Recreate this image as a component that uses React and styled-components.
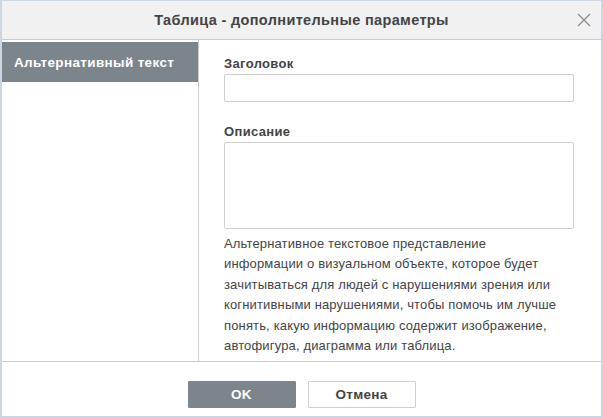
import React from "react";
import styled, { createGlobalStyle } from "styled-components";

const GlobalStyle = createGlobalStyle`
  html, body {
    margin: 0;
    padding: 0;
    background: #cdd7e3;
  }
  body {
    font-family: "Liberation Sans", Arial, sans-serif;
    color: #444444;
  }
`;

const hintLines = [
  "Альтернативное текстовое представление",
  "информации о визуальном объекте, которое будет",
  "зачитываться для людей с нарушениями зрения или",
  "когнитивными нарушениями, чтобы помочь им лучше",
  "понять, какую информацию содержит изображение,",
  "автофигура, диаграмма или таблица.",
];

function App() {
  return (
    <>
      <GlobalStyle />
      <Window>
        <Header>
          <Title>Таблица - дополнительные параметры</Title>
          <CloseButton aria-label="close">
            <svg width="14" height="14" viewBox="0 0 14 14">
              <path d="M1 1 L13 13 M13 1 L1 13" stroke="#8a8a8a" strokeWidth="1.2" fill="none" />
            </svg>
          </CloseButton>
        </Header>
        <Body>
          <Sidebar>
            <SideItem active>Альтернативный текст</SideItem>
          </Sidebar>
          <Panel>
            <Label>Заголовок</Label>
            <Input type="text" />
            <Label spaced>Описание</Label>
            <TextArea />
            <Hint>
              {hintLines.map((line) => (
                <HintLine key={line}>{line}</HintLine>
              ))}
            </Hint>
          </Panel>
        </Body>
        <Footer>
          <Button primary>OK</Button>
          <Button>Отмена</Button>
        </Footer>
      </Window>
    </>
  );
}

const Window = styled.div`
  box-sizing: border-box;
  width: 603px;
  height: 418px;
  border: 2px solid #cdd7e3;
  border-top-width: 1px;
  background: #ffffff;
  display: flex;
  flex-direction: column;
`;

const Header = styled.div`
  position: relative;
  height: 38px;
  flex: none;
  background: #f1f1f1;
  border-bottom: 1px solid #cbcbcb;
  display: flex;
  align-items: center;
  justify-content: center;
`;

const Title = styled.div`
  font-size: 14.5px;
  font-weight: bold;
  letter-spacing: 0.35px;
  color: #444444;
`;

const CloseButton = styled.div`
  position: absolute;
  right: 10px;
  top: 12px;
  width: 14px;
  height: 14px;
  svg {
    display: block;
  }
`;

const Body = styled.div`
  flex: 1;
  display: flex;
  min-height: 0;
  border-bottom: 1px solid #cbcbcb;
`;

const Sidebar = styled.div`
  width: 196px;
  flex: none;
  border-right: 1px solid #cbcbcb;
  padding-top: 2px;
`;

const SideItem = styled.div`
  height: 40px;
  display: flex;
  align-items: center;
  padding-left: 12px;
  font-size: 13.5px;
  letter-spacing: 0.35px;
  font-weight: bold;
  background: ${(p) => (p.active ? "#7d858c" : "transparent")};
  color: ${(p) => (p.active ? "#ffffff" : "#444444")};
`;

const Panel = styled.div`
  flex: 1;
  padding: 16px 27px 0 25px;
  display: flex;
  flex-direction: column;
`;

const Label = styled.div`
  font-size: 13px;
  font-weight: bold;
  letter-spacing: 0.35px;
  line-height: 15px;
  color: #444444;
  margin-top: ${(p) => (p.spaced ? "22px" : "0")};
  margin-bottom: 3px;
`;

const Input = styled.input`
  box-sizing: border-box;
  width: 350px;
  height: 28px;
  border: 1px solid #cfcfcf;
  border-radius: 2px;
  outline: none;
  margin: 0;
`;

const TextArea = styled.textarea`
  box-sizing: border-box;
  width: 350px;
  height: 87px;
  border: 1px solid #cfcfcf;
  border-radius: 2px;
  outline: none;
  resize: none;
  margin: 0;
  display: block;
`;

const Hint = styled.div`
  margin-top: 5px;
  font-size: 13px;
  letter-spacing: 0.15px;
  line-height: 20.4px;
  color: #444444;
`;

const HintLine = styled.div`
  white-space: nowrap;
`;

const Footer = styled.div`
  height: 54px;
  flex: none;
  box-sizing: border-box;
  padding-top: 19px;
  display: flex;
  justify-content: center;
  gap: 12px;
`;

const Button = styled.div`
  box-sizing: border-box;
  width: 108px;
  height: 27px;
  display: flex;
  align-items: center;
  justify-content: center;
  font-size: 13.5px;
  letter-spacing: 0.3px;
  font-weight: bold;
  border-radius: 1px;
  background: ${(p) => (p.primary ? "#7d858c" : "#ffffff")};
  color: ${(p) => (p.primary ? "#ffffff" : "#444444")};
  border: 1px solid ${(p) => (p.primary ? "#7d858c" : "#cfcfcf")};
`;

export default App;
